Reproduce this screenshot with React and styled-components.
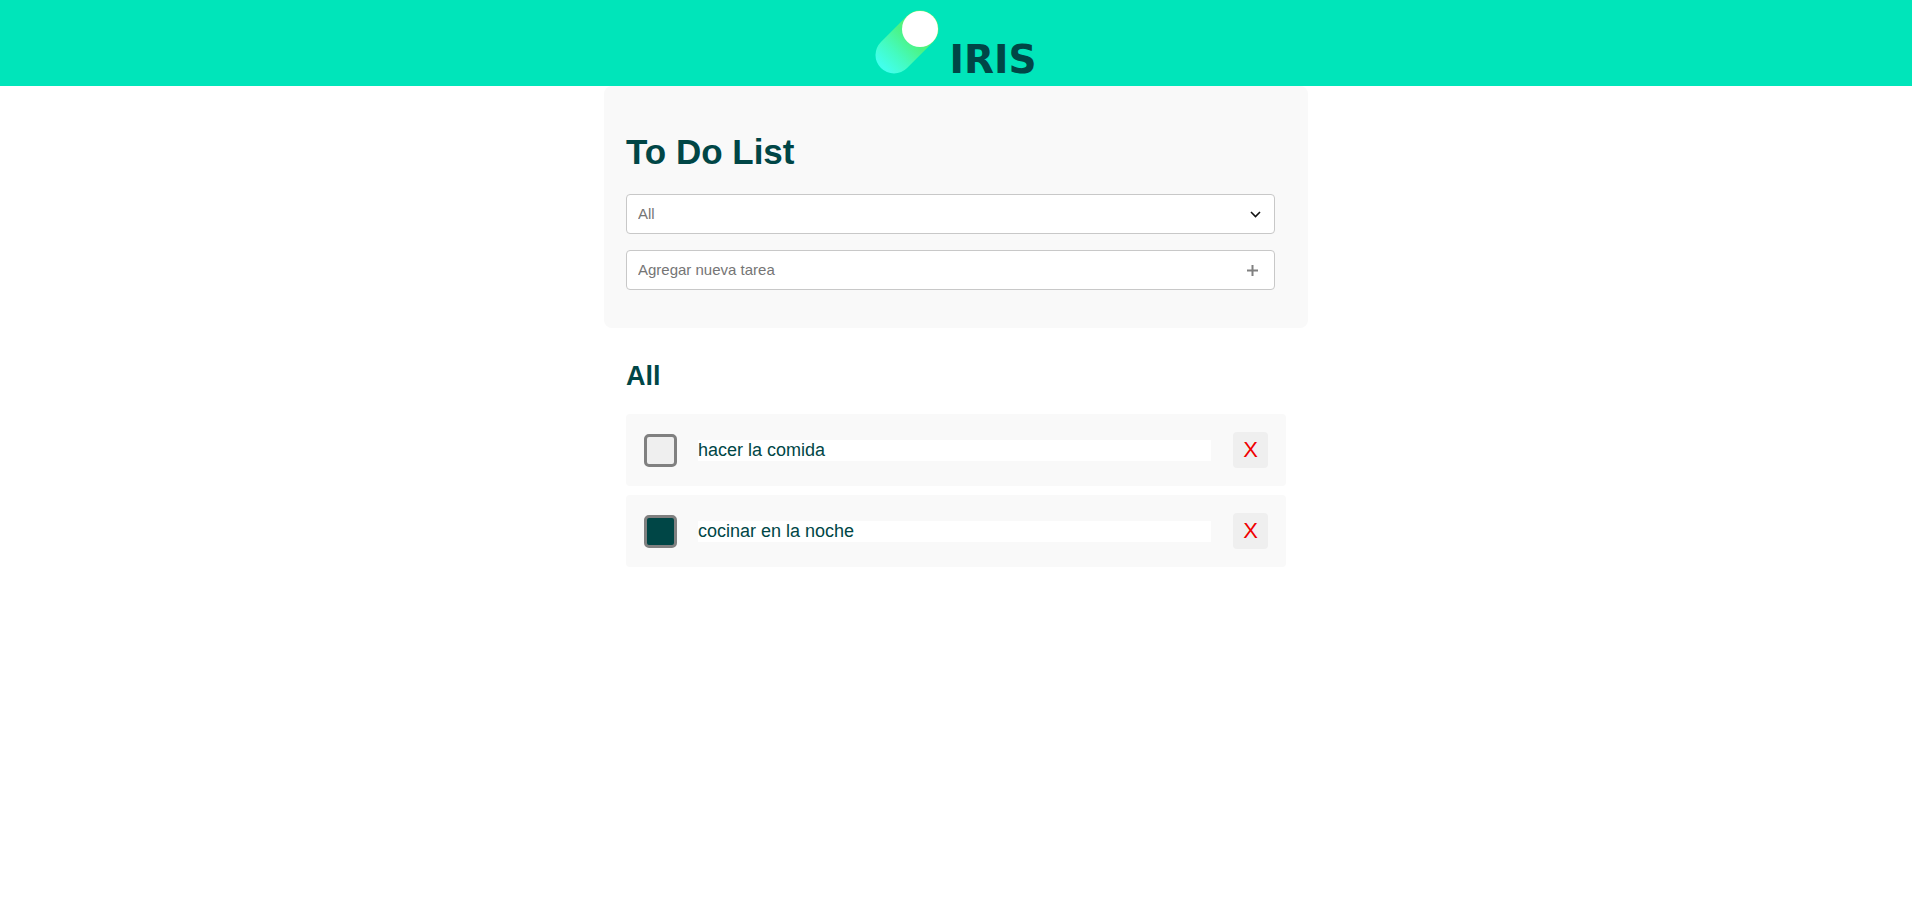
import React, { useState } from "react";
import styled, { createGlobalStyle } from "styled-components";

const GlobalStyle = createGlobalStyle`
  * { box-sizing: border-box; }
  body {
    margin: 0;
    background: #fff;
    color: #004646;
    font-family: "Liberation Sans", Arial, sans-serif;
  }
  button, input, select { font-family: inherit; }
`;

const Header = styled.header`
  display: flex;
  justify-content: center;
  height: 86px;
  background: #00e5ba;
`;

const Brand = styled.a`
  display: flex;
  align-items: flex-end;
  gap: 10px;
  padding-bottom: 12px;
  color: #004646;
  text-decoration: none;
`;

const BrandMark = styled.svg`
  width: 64px;
  height: 64px;
`;

const BrandName = styled.span`
  font: bold 39px/28px "DejaVu Sans", sans-serif;
`;

const Page = styled.main`
  width: 100%;
  max-width: 704px;
  margin: 0 auto;
`;

const Panel = styled.section`
  display: flex;
  flex-direction: column;
  gap: 16px;
  padding: 46px 33px 38px 22px;
  border-radius: 8px;
  background: #f9f9f9;
`;

const Title = styled.h1`
  margin: 0 0 6px;
  font-size: 35px;
  line-height: 40px;
`;

const Field = styled.div`
  display: flex;
  align-items: center;
  position: relative;
  height: 40px;
  border: 1px solid #c8c8c8;
  border-radius: 4px;
  background: #fff;
`;

const Filter = styled.select`
  appearance: none;
  width: 100%;
  height: 100%;
  padding: 0 40px 2px 11px;
  border: 0;
  background: transparent;
  color: #757575;
  font-size: 15px;
`;

const Chevron = styled.svg`
  position: absolute;
  right: 13px;
  width: 11px;
  height: 7px;
  pointer-events: none;
`;

const NewTask = styled.input`
  flex: 1;
  min-width: 0;
  height: 100%;
  padding: 0 11px 2px;
  border: 0;
  background: transparent;
  color: #004646;
  font-size: 15px;
  &::placeholder { color: #757575; }
`;

const AddButton = styled.button`
  display: flex;
  align-items: center;
  padding: 3px 16px 3px 8px;
  border: 0;
  background: transparent;
  cursor: pointer;
`;

const Tasks = styled.section`
  padding: 32px 22px;
`;

const Subtitle = styled.h2`
  margin: 0 0 22px;
  font-size: 27px;
  line-height: 32px;
`;

const List = styled.ul`
  display: flex;
  flex-direction: column;
  gap: 9px;
  margin: 0;
  padding: 0;
  list-style: none;
`;

const Task = styled.li`
  display: flex;
  align-items: center;
  height: 72px;
  padding: 0 18px;
  border-radius: 4px;
  background: #f9f9f9;
`;

const Check = styled.input`
  appearance: none;
  flex: none;
  width: 33px;
  height: 33px;
  margin: 0 21px 0 0;
  border: 3px solid #808080;
  border-radius: 5px;
  background: #efefef;
  cursor: pointer;
  &:checked { background: #004646; }
`;

const TaskText = styled.input`
  flex: 1;
  min-width: 0;
  height: 21px;
  padding: 0;
  border: 0;
  background: #fff;
  color: #004646;
  font-size: 18px;
`;

const Remove = styled.button`
  flex: none;
  width: 35px;
  height: 36px;
  margin-left: 22px;
  padding: 0;
  border: 0;
  border-radius: 4px;
  background: #efefef;
  color: #f00000;
  font-size: 22px;
  line-height: 36px;
  cursor: pointer;
`;

const initialTasks = [
  { id: 1, text: "hacer la comida", done: false },
  { id: 2, text: "cocinar en la noche", done: true },
];

export default function App() {
  const [tasks, setTasks] = useState(initialTasks);
  const [draft, setDraft] = useState("");

  const update = (id, change) =>
    setTasks(tasks.map((task) => (task.id === id ? { ...task, ...change } : task)));

  const add = () => {
    if (!draft.trim()) return;
    setTasks([...tasks, { id: Date.now(), text: draft, done: false }]);
    setDraft("");
  };

  return (
    <>
      <GlobalStyle />
      <Header>
        <Brand href="#">
          <BrandMark viewBox="0 0 64 64" aria-hidden="true">
            <defs>
              <linearGradient id="trail" gradientUnits="userSpaceOnUse" x1="8" y1="56" x2="50" y2="14">
                <stop offset="0" stopColor="#42ffeb" />
                <stop offset="0.3" stopColor="#44fbc0" />
                <stop offset="0.65" stopColor="#4cf384" />
                <stop offset="1" stopColor="#70f060" />
              </linearGradient>
            </defs>
            <path d="M19 45 45 19" stroke="url(#trail)" strokeWidth="37" strokeLinecap="round" />
            <circle cx="45" cy="19" r="18" fill="#fff" />
          </BrandMark>
          <BrandName>IRIS</BrandName>
        </Brand>
      </Header>
      <Page>
        <Panel>
          <Title>To Do List</Title>
          <Field>
            <Filter aria-label="Filter">
              <option>All</option>
            </Filter>
            <Chevron viewBox="0 0 11 7" aria-hidden="true">
              <path d="M1 1l4.5 4.5L10 1" fill="none" stroke="#111" strokeWidth="1.6" />
            </Chevron>
          </Field>
          <Field>
            <NewTask
              aria-label="Agregar nueva tarea"
              placeholder="Agregar nueva tarea"
              value={draft}
              onChange={(e) => setDraft(e.target.value)}
            />
            <AddButton type="button" aria-label="Agregar" onClick={add}>
              <svg width="11" height="11" viewBox="0 0 11 11" aria-hidden="true">
                <path d="M5.5 0v11M0 5.5h11" stroke="#808080" strokeWidth="2" />
              </svg>
            </AddButton>
          </Field>
        </Panel>
        <Tasks>
          <Subtitle>All</Subtitle>
          <List>
            {tasks.map((task) => (
              <Task key={task.id}>
                <Check
                  type="checkbox"
                  aria-label={task.text}
                  checked={task.done}
                  onChange={(e) => update(task.id, { done: e.target.checked })}
                />
                <TaskText
                  aria-label="Tarea"
                  value={task.text}
                  onChange={(e) => update(task.id, { text: e.target.value })}
                />
                <Remove
                  type="button"
                  onClick={() => setTasks(tasks.filter((t) => t.id !== task.id))}
                >
                  X
                </Remove>
              </Task>
            ))}
          </List>
        </Tasks>
      </Page>
    </>
  );
}
